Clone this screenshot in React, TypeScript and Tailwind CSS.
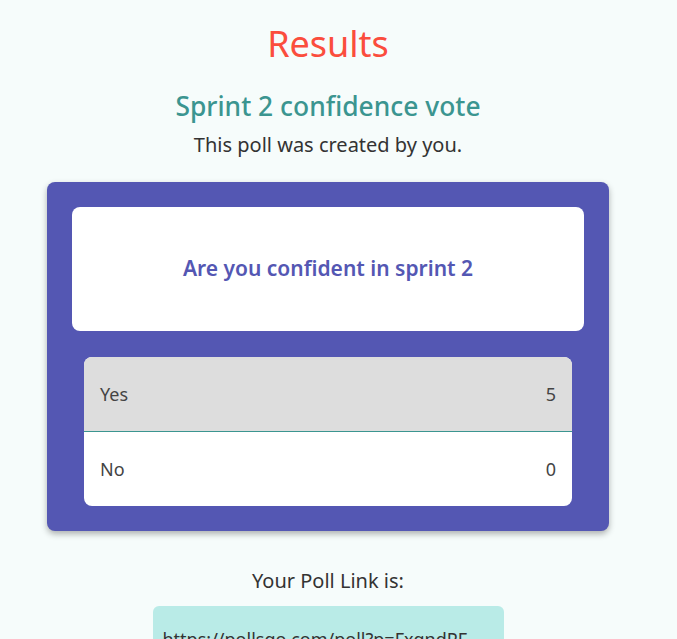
import React from "react";

const results = [
  { option: "Yes", votes: 5 },
  { option: "No", votes: 0 },
];

export default function App() {
  return (
    <div
      className="min-h-screen bg-[#f6fcfb] text-[#333333]"
      style={{ fontFamily: "'Noto Sans', 'Open Sans', sans-serif" }}
    >
      <div className="w-[656px] flex flex-col items-center pt-[20px]">
        <h1 className="text-[36px] leading-[48px] text-[#fb4d3d]">Results</h1>
        <h2 className="mt-[21px] text-[26.4px] leading-[34px] font-medium text-[#3b9590]">
          Sprint 2 confidence vote
        </h2>
        <p className="mt-[9px] text-[20px] leading-[26px]">This poll was created by you.</p>

        <div className="mt-[24px] w-[562px] bg-[#5457b3] rounded-lg shadow-[0_3px_6px_rgba(0,0,0,0.3)] p-[25px] flex flex-col gap-[26px]">
          <div className="h-[124px] bg-white rounded-lg flex items-center justify-center">
            <span className="text-[21px] font-semibold text-[#5457b3]">
              Are you confident in sprint 2
            </span>
          </div>
          <div className="mx-[12px] bg-white rounded-lg overflow-hidden">
            {results.map((r, i) => (
              <div
                key={r.option}
                className={`px-[16px] flex items-center justify-between text-[18px] text-[#444444] ${
                  i === 0 ? "bg-[#dddddd] border-b border-[#3b9590] h-[75px]" : "h-[74px]"
                }`}
              >
                <span>{r.option}</span>
                <span>{r.votes}</span>
              </div>
            ))}
          </div>
        </div>

        <p className="mt-[36px] text-[20px] leading-[28px]">Your Poll Link is:</p>
        <div className="mt-[11px] w-[351px] bg-[#b9ebe7] rounded-md px-[10px] pt-[20px] pb-[16px] text-[18px]">
          https://pollsgo.com/poll?p=FxgndPF
        </div>
      </div>
    </div>
  );
}
